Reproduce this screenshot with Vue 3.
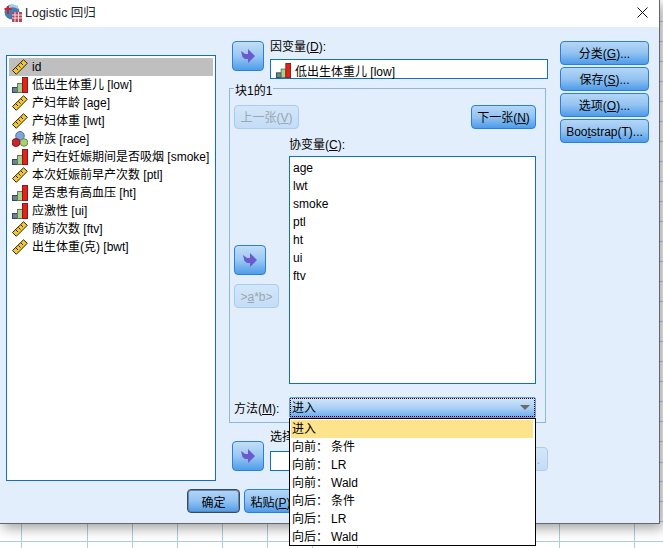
<script setup>
const vars = [
  { name: 'id', icon: 'ruler', selected: true },
  { name: '低出生体重儿 [low]', icon: 'bars' },
  { name: '产妇年龄 [age]', icon: 'ruler' },
  { name: '产妇体重 [lwt]', icon: 'ruler' },
  { name: '种族 [race]', icon: 'balls' },
  { name: '产妇在妊娠期间是否吸烟 [smoke]', icon: 'bars' },
  { name: '本次妊娠前早产次数 [ptl]', icon: 'ruler' },
  { name: '是否患有高血压 [ht]', icon: 'bars' },
  { name: '应激性 [ui]', icon: 'bars' },
  { name: '随访次数 [ftv]', icon: 'ruler' },
  { name: '出生体重(克) [bwt]', icon: 'ruler' }
]
const covariates = ['age', 'lwt', 'smoke', 'ptl', 'ht', 'ui', 'ftv']
const methods = [
  ['进入', ''],
  ['向前：', '条件'],
  ['向前：', 'LR'],
  ['向前：', 'Wald'],
  ['向后：', '条件'],
  ['向后：', 'LR'],
  ['向后：', 'Wald']
]
const vLines = [21, 87, 132, 177, 222, 267, 312, 357, 559, 634]
const hLines = [21, 41, 61, 81, 101, 121, 141, 161, 181, 201, 221, 241, 261, 281, 301, 321, 341, 361, 381, 401, 421, 441, 462, 481, 501, 521, 541]
</script>

<template>
  <div class="page">
    <svg class="sheet" width="663" height="548" aria-hidden="true">
      <line v-for="x in vLines" :key="'v' + x" :x1="x + 0.5" :x2="x + 0.5" y1="0" y2="548" stroke="#aecbe6" />
      <line v-for="y in hLines" :key="'h' + y" x1="0" x2="663" :y1="y + 0.5" :y2="y + 0.5" stroke="#aecbe6" />
    </svg>

    <div class="dialog">
      <header class="titlebar">
        <svg class="app-icon" width="18" height="18" viewBox="0 0 18 18">
          <circle cx="8" cy="8" r="7.5" fill="#3f7fb5" />
          <path d="M1.5 6 Q8 1 14 5 L14 2 Q8 -1 3 3Z" fill="#a8cbe6" />
          <rect x="3" y="2" width="2" height="8" fill="#c8232c" />
          <rect x="0.5" y="4" width="7" height="2" fill="#c8232c" />
          <rect x="8" y="8" width="10" height="10" fill="#b5465a" />
          <path d="M8 11h10M8 14h10M11 8v10M14.500 8v10" stroke="#f3dfe2" />
        </svg>
        <span class="title">Logistic 回归</span>
        <svg class="close" width="11" height="11" viewBox="0 0 11 11">
          <path d="M0.500 0.500L10.500 10.500M10.500 0.500L0.500 10.500" stroke="#111" stroke-width="1" fill="none" />
        </svg>
      </header>

      <div class="body">
        <div class="top">
          <ul class="varlist">
            <li v-for="v in vars" :key="v.name" class="var" :class="{ selected: v.selected }">
              <svg width="16" height="16" viewBox="0 0 16 16" class="icon">
                <template v-if="v.icon === 'ruler'">
                  <path d="M0.500 11.500L11.500 0.800L15.300 4.300L4.300 15.300Z" fill="#f4c92e" stroke="#2a2412" />
                  <path d="M4 9l2 2M6.500 6.500l2 2M9 4l2 2" stroke="#2a2412" />
                </template>
                <template v-else-if="v.icon === 'bars'">
                  <rect x="0.500" y="10.500" width="5" height="5" fill="#6d8296" stroke="#33475a" />
                  <rect x="5.500" y="6.500" width="5" height="9" fill="#a9cf8e" stroke="#5f7a4c" />
                  <rect x="10.500" y="0.500" width="5" height="15" fill="#e2231a" stroke="#8f1a14" />
                </template>
                <template v-else>
                  <circle cx="8" cy="4.800" r="4.300" fill="#7fa6dc" stroke="#4b6ea3" />
                  <circle cx="4" cy="11.500" r="4" fill="#c9252b" stroke="#7c1a1c" />
                  <circle cx="12" cy="11.500" r="3.800" fill="#a9cf7c" stroke="#6b8a4a" />
                </template>
              </svg>
              <span>{{ v.name }}</span>
            </li>
          </ul>

          <div class="middle">
            <div class="dep-row">
              <button class="btn arrow dep-arrow" type="button">
                <svg width="14" height="14" viewBox="0 0 14 14"><path d="M0 2L4 5H7V0L14 7L7 14V10H4L1.500 8Z" fill="#6a5acd" /></svg>
              </button>
              <div class="dep-field">
                <label class="lbl dep-lbl">因变量(<u>D</u>):</label>
                <div class="field dep-value">
                  <svg width="16" height="16" viewBox="0 0 16 16" class="icon">
                    <rect x="0.500" y="10.500" width="5" height="5" fill="#6d8296" stroke="#33475a" />
                    <rect x="5.500" y="6.500" width="5" height="9" fill="#a9cf8e" stroke="#5f7a4c" />
                    <rect x="10.500" y="0.500" width="5" height="15" fill="#e2231a" stroke="#8f1a14" />
                  </svg>
                  <span>低出生体重儿 [low]</span>
                </div>
              </div>
            </div>

            <fieldset class="group">
              <span class="legend">块1的1</span>
              <div class="nav">
                <button class="btn disabled nav-btn" type="button">上一张(<u>V</u>)</button>
                <button class="btn nav-btn" type="button">下一张(<u>N</u>)</button>
              </div>
              <div class="cov">
                <div class="cov-side">
                  <button class="btn arrow" type="button">
                    <svg width="14" height="14" viewBox="0 0 14 14"><path d="M0 2L4 5H7V0L14 7L7 14V10H4L1.500 8Z" fill="#6a5acd" /></svg>
                  </button>
                  <button class="btn disabled interact" type="button">&gt;<u>a</u>*b&gt;</button>
                </div>
                <div class="cov-main">
                  <label class="lbl cov-lbl">协变量(<u>C</u>):</label>
                  <ul class="covlist">
                    <li v-for="c in covariates" :key="c">{{ c }}</li>
                  </ul>
                </div>
              </div>
              <div class="method">
                <label class="lbl method-lbl">方法(<u>M</u>):</label>
                <div class="combo">
                  <div class="combo-inner">
                    <span>进入</span>
                    <i class="caret"></i>
                  </div>
                  <ul class="menu">
                    <li v-for="(m, i) in methods" :key="i" :class="{ active: i === 0 }">
                      <span class="m-a">{{ m[0] }}</span><span>{{ m[1] }}</span>
                    </li>
                  </ul>
                </div>
              </div>
            </fieldset>

            <div class="sel-row">
              <button class="btn arrow sel-arrow" type="button">
                <svg width="14" height="14" viewBox="0 0 14 14"><path d="M0 2L4 5H7V0L14 7L7 14V10H4L1.500 8Z" fill="#6a5acd" /></svg>
              </button>
              <div class="sel-main">
                <label class="lbl">选择</label>
                <div class="sel-line">
                  <div class="field sel-field"></div>
                  <button class="btn disabled rule" type="button">...</button>
                </div>
              </div>
            </div>
          </div>

          <div class="actions">
            <button class="btn side" type="button">分类(<u>G</u>)...</button>
            <button class="btn side" type="button">保存(<u>S</u>)...</button>
            <button class="btn side" type="button">选项(<u>O</u>)...</button>
            <button class="btn side" type="button">Boo<u>t</u>strap(T)...</button>
          </div>
        </div>

        <div class="footer">
          <button class="btn foot default" type="button">确定</button>
          <button class="btn foot" type="button">粘贴(<u>P</u>)</button>
        </div>
      </div>
    </div>
  </div>
</template>

<style>
html, body { margin: 0; padding: 0; background: #fff; }
</style>

<style scoped>
* { box-sizing: border-box; }
.page {
  position: relative;
  width: 663px;
  height: 548px;
  overflow: hidden;
  background: #fff;
  font: 12px/18px "Liberation Sans", "Noto Sans CJK SC", sans-serif;
  color: #000;
}
.sheet { position: absolute; left: 0; top: 0; }
ul { list-style: none; margin: 0; padding: 0; }
u { text-decoration: underline; }

.dialog {
  position: relative;
  width: 660px;
  height: 524px;
  display: flex;
  flex-direction: column;
  background: #e2eefb;
  border-right: 1px solid #666;
  border-bottom: 1px solid #666;
  box-shadow: 3px 4px 12px rgba(0, 0, 0, 0.38);
}
.titlebar {
  height: 27px;
  flex: none;
  background: #fff;
  display: flex;
  align-items: center;
  padding: 0 11px 2px 4px;
}
.app-icon { flex: none; }
.title { margin-left: 3px; font-size: 12.500px; color: #222; }
.close { margin-left: auto; }

.body { flex: 1; display: flex; flex-direction: column; }
.top { display: flex; align-items: flex-start; padding: 14px 0 0 6px; height: 462px; }

.varlist {
  width: 210px;
  height: 426px;
  margin-top: 14px;
  padding: 2px;
  background: #fff;
  border: 1px solid #1170c6;
  flex: none;
}
.var {
  height: 18px;
  display: flex;
  align-items: center;
  gap: 4px;
  padding-left: 3px;
  white-space: nowrap;
}
.var.selected { background: #bfbfbf; }
.icon { flex: none; }

.middle { width: 316px; margin-left: 16px; flex: none; }
.dep-row { display: flex; gap: 6px; align-items: flex-start; }
.dep-arrow { margin-top: 8px; }
.dep-field { width: 278px; }
.dep-lbl { margin-top: -3px; margin-bottom: 3px; }
.lbl { display: block; line-height: 18px; white-space: nowrap; }
.field { background: #fff; border: 1px solid #1170c6; height: 20px; }
.dep-value { display: flex; align-items: center; gap: 4px; padding: 3px 0 0 5px; }
.dep-value .icon { width: 15px; height: 15px; }
.dep-value span { position: relative; top: 1px; }

.btn {
  display: block;
  margin: 0;
  padding: 2px 0 0;
  height: 24px;
  font: 12px/18px "Liberation Sans", "Noto Sans CJK SC", sans-serif;
  color: #000;
  white-space: nowrap;
  border: 1px solid #2a80d6;
  border-radius: 4px;
  background: linear-gradient(#b4d6f6 0%, #93c3f2 50%, #4e9be9 100%);
}
.btn.disabled {
  color: #9aa6b2;
  border-color: #a8cdf0;
  background: linear-gradient(#d4e7f9, #c4dcf6);
}
.btn.arrow {
  width: 32px;
  height: 30px;
  padding: 0;
  display: flex;
  align-items: center;
  justify-content: center;
  background: linear-gradient(#c2ddf7 0%, #9ac8f3 50%, #4f9de9 100%);
}

.group {
  position: relative;
  margin: 9px 0 0 -3px;
  padding: 16px 9px 0 4px;
  width: 317px;
  height: 335px;
  border: 1px solid #8fb7dc;
  min-width: 0;
}
.legend {
  position: absolute;
  left: 4px;
  top: -6px;
  padding: 0 1px;
  background: #e2eefb;
  line-height: 16px;
}
.nav { display: flex; justify-content: space-between; }
.nav-btn { width: 65px; }
.cov { display: flex; }
.cov-side { width: 55px; flex: none; padding-top: 116px; }
.interact { width: 45px; margin-top: 9px; }
.cov-main { width: 247px; }
.cov-lbl { margin: 7px 0 2px 0; }
.covlist {
  height: 228px;
  background: #fff;
  border: 1px solid #1170c6;
  padding: 2px 3px;
}
.covlist li { height: 18px; }

.method { display: flex; margin-top: 13px; }
.method-lbl { width: 55px; padding-top: 3px; }
.combo { position: relative; width: 247px; height: 21px; }
.combo-inner {
  height: 21px;
  padding: 1px 2px;
  display: flex;
  justify-content: space-between;
  align-items: center;
  border: 1px solid #5aa3ea;
  border-radius: 2px;
  background: linear-gradient(#d3e6f9 0%, #a9cff5 55%, #6aabee 100%);
  outline: 1px dotted #000;
  outline-offset: -2px;
}
.caret {
  width: 0;
  height: 0;
  margin-right: 3px;
  border-left: 5px solid transparent;
  border-right: 5px solid transparent;
  border-top: 5px solid #6b6b6b;
}
.menu {
  position: absolute;
  left: 0;
  top: 21px;
  width: 247px;
  height: 128px;
  background: #fff;
  border: 1px solid #000;
  padding: 1px 2px 1px 1px;
  z-index: 5;
}
.menu li { height: 18px; display: flex; padding-left: 1px; white-space: nowrap; }
.menu li.active { background: #fde38b; }
.m-a { min-width: 39px; }
.menu li.active .m-a { min-width: 0; }

.sel-row { display: flex; gap: 6px; margin-top: 5px; }
.sel-arrow { margin-top: 13px; }
.sel-main { width: 278px; }
.sel-line { display: flex; justify-content: space-between; align-items: flex-end; margin-top: 1px; }
.sel-field { width: 210px; }
.rule { width: 64px; text-align: right; padding-right: 7px; }

.actions { display: flex; flex-direction: column; gap: 2px; width: 89px; margin-left: 12px; flex: none; }
.side { width: 89px; }

.footer { display: flex; gap: 4px; padding-left: 187px; }
.foot { width: 53px; padding-top: 4px; }
.foot.default { border-color: #3a4a5a; box-shadow: inset 0 0 0 1px #5d88b5; }
</style>
